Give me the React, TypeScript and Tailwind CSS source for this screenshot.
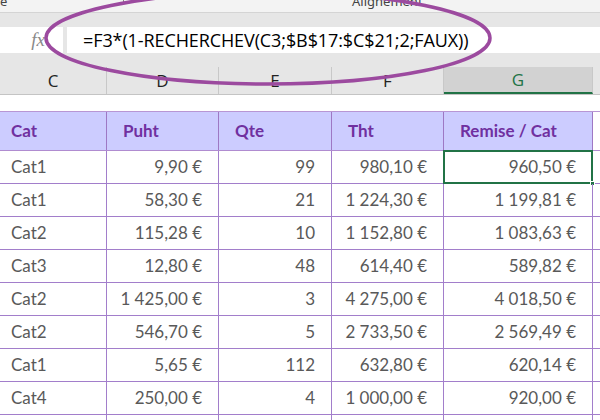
const cols = [
  { w: 'w-[107px]', label: 'C' },
  { w: 'w-[112px]', label: 'D' },
  { w: 'w-[113px]', label: 'E' },
  { w: 'w-[112px]', label: 'F' },
  { w: 'w-[149px]', label: 'G' },
]

const rows = [
  ['Cat1', '9,90 €', '99', '980,10 €', '960,50 €'],
  ['Cat1', '58,30 €', '21', '1 224,30 €', '1 199,81 €'],
  ['Cat2', '115,28 €', '10', '1 152,80 €', '1 083,63 €'],
  ['Cat3', '12,80 €', '48', '614,40 €', '589,82 €'],
  ['Cat2', '1 425,00 €', '3', '4 275,00 €', '4 018,50 €'],
  ['Cat2', '546,70 €', '5', '2 733,50 €', '2 569,49 €'],
  ['Cat1', '5,65 €', '112', '632,80 €', '620,14 €'],
  ['Cat4', '250,00 €', '4', '1 000,00 €', '920,00 €'],
  ['', '', '', '', ''],
]

const headers = ['Cat', 'Puht', 'Qte', 'Tht', 'Remise / Cat']

const App = () => {
  return (
    <div className="relative w-[600px] h-[420px] overflow-hidden bg-white font-['Lato','Liberation_Sans',sans-serif]">
      {/* ribbon bottom strip */}
      <div className="h-[13px] bg-[#f3f3f3] border-b border-[#d4d4d4] relative text-[13px] leading-none text-[#444] font-['Noto_Sans',sans-serif]">
        <span className="absolute left-0 -top-[5px]">e</span>
        <span className="absolute left-[352px] -top-[5px]">Alignement</span>
        <span className="absolute left-[120px] top-0 w-[4px] h-[4px] border-r border-b border-[#888]" />
      </div>

      {/* formula bar */}
      <div className="h-[54px] bg-[#e6e6e6] pt-[14px] pb-[14px] flex">
        <div className="w-[63px] bg-white flex items-center justify-end pr-[18px]">
          <span className="font-['Liberation_Serif',serif] italic text-[19px] text-[#8a8a8a]">fx</span>
        </div>
        <div className="flex-1 ml-[4px] bg-white flex items-center pl-[16px] text-[18px] text-black font-['Open_Sans',sans-serif] tracking-[-0.1px]">
          =F3*(1-RECHERCHEV(C3;$B$17:$C$21;2;FAUX))
        </div>
      </div>

      {/* column headers */}
      <div className="h-[28px] flex bg-[#e6e6e6] border-b border-[#c4c4c4] text-[17px] text-[#222] font-['Open_Sans',sans-serif]">
        {cols.map((c) => (
          <div
            key={c.label}
            className={`${c.w} flex items-center justify-center border-r border-[#c8c8c8] ${
              c.label === 'G' ? 'bg-[#d2d2d2] text-[#217346] border-b-2 border-b-[#217346]' : ''
            }`}
          >
            {c.label}
          </div>
        ))}
        <div className="flex-1" />
      </div>

      {/* empty row */}
      <div className="h-[17px] border-b border-[#b896d4]" />

      {/* table header */}
      <div className="h-[39px] flex bg-[#ccccff] border-b border-[#b08cd0] text-[17px] font-bold text-[#7030a0]">
        {headers.map((h, i) => (
          <div
            key={h}
            className={`${cols[i].w} flex items-center border-r border-[#9e78c4] ${i === 0 ? 'pl-[11px]' : 'pl-[16px]'}`}
          >
            {h}
          </div>
        ))}
        <div className="flex-1 bg-white" />
      </div>

      {/* data rows */}
      {rows.map((r, ri) => (
        <div key={ri} className="h-[33px] flex border-b border-[#a27ecb] text-[17px] text-[#595959]">
          {r.map((v, ci) => (
            <div
              key={ci}
              className={`${cols[ci].w} relative flex items-center border-r border-[#a27ecb] ${
                ci === 0 ? 'pl-[11px]' : 'justify-end pr-[16px]'
              }`}
            >
              {v}
              {ri === 0 && ci === 4 && (
                <>
                  <span className="absolute -left-px -top-px -right-px -bottom-px border-2 border-[#217346]" />
                  <span className="absolute -right-[3px] -bottom-[3px] w-[5px] h-[5px] bg-[#217346] border border-white" />
                </>
              )}
            </div>
          ))}
          <div className="flex-1" />
        </div>
      ))}

      {/* purple ellipse annotation */}
      <svg className="absolute left-0 top-0 pointer-events-none" width="600" height="420">
        <ellipse cx="268" cy="38" rx="222" ry="46" fill="none" stroke="#9c4a9f" strokeWidth="3.5" />
      </svg>
    </div>
  )
}

export default App
